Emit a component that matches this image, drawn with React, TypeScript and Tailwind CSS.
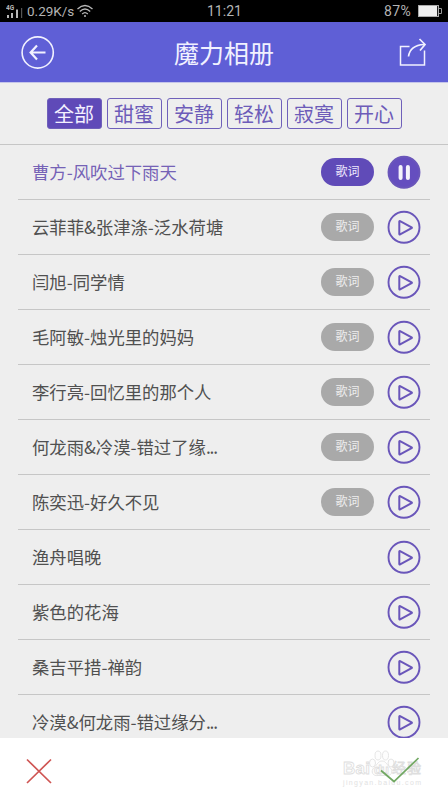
const tags = ['全部', '甜蜜', '安静', '轻松', '寂寞', '开心'];

const songs = [
  { title: '曹方-风吹过下雨天', lyrics: true, playing: true },
  { title: '云菲菲&张津涤-泛水荷塘', lyrics: true },
  { title: '闫旭-同学情', lyrics: true },
  { title: '毛阿敏-烛光里的妈妈', lyrics: true },
  { title: '李行亮-回忆里的那个人', lyrics: true },
  { title: '何龙雨&冷漠-错过了缘', clipped: true, lyrics: true },
  { title: '陈奕迅-好久不见', lyrics: true },
  { title: '渔舟唱晚', lyrics: false },
  { title: '紫色的花海', lyrics: false },
  { title: '桑吉平措-禅韵', lyrics: false },
  { title: '冷漠&何龙雨-错过缘分', clipped: true, lyrics: false },
];

function StatusBar() {
  return (
    <div className="relative flex h-[22px] shrink-0 items-center justify-between bg-black pl-[6px] pr-[5px] font-['Roboto','Noto_Sans',sans-serif] text-[13px] leading-[22px] text-[#b4b4b4]">
      <div className="flex items-center">
        <svg width="18" height="16" viewBox="0 0 18 16" fill="#b8b8b8">
          <text x="0" y="7" fontSize="6.500" fontWeight="700">4G</text>
          <path d="M1 12h2v3H1zM5 10h2v5H5zM10 6.500h2V15h-2z" />
          <path d="M15 5h1.200v10H15z" fill="#555" />
        </svg>
        <span className="ml-[3px] w-[47px] whitespace-nowrap text-[13.500px]">0.29K/s</span>
        <svg className="ml-[2px]" width="18" height="14" viewBox="0 0 18 14" fill="none" stroke="#b8b8b8" strokeWidth="1.300">
          <path d="M1.500 5Q9-2 16.500 5M3.800 7.500Q9 2.600 14.200 7.500M6.200 10Q9 7.300 11.800 10" />
          <circle cx="9" cy="12" r="1" fill="#b8b8b8" stroke="none" />
        </svg>
      </div>
      <span className="absolute left-[207px] text-[14px]">11:21</span>
      <div className="flex items-center gap-[7px]">
        <span className="text-[14px] tracking-[0.3px]">87%</span>
        <svg width="25" height="12" viewBox="0 0 25 12">
          <rect x=".5" y=".5" width="20" height="11" fill="#eee" stroke="#aaa" />
          <path d="M19 1h1v10h-1z" fill="#222" />
          <path d="M21 3.500h2.500v5H21" fill="none" stroke="#999" />
        </svg>
      </div>
    </div>
  );
}

function Header() {
  return (
    <header className="flex h-[61px] shrink-0 items-center justify-between border-b border-[#c5c5ea] bg-[#5f5fd6] pl-[21px] pr-[21px] text-[#f1f1ff]">
      <svg width="34" height="34" viewBox="0 0 34 34" fill="none" stroke="currentColor" strokeWidth="1.600">
        <circle cx="16.700" cy="17.500" r="15.600" />
        <path d="M24.500 17.500H10M16 10.500 9.600 17.500 16 24.500" strokeWidth="2.200" />
      </svg>
      <h1 className="text-[25px] leading-[36px]">魔力相册</h1>
      <svg width="34" height="34" viewBox="0 0 34 34" fill="none" stroke="currentColor" strokeWidth="1.500">
        <path d="M16.500 11.500H7.500V30h24V15.500" />
        <path d="M15.500 21.500C16.500 14.500 21 10 31 9.500" strokeWidth="1.700" />
        <path d="M26.500 4 32 9.500 27 15.500" strokeWidth="1.700" />
      </svg>
    </header>
  );
}

function Tags() {
  return (
    <nav className="flex h-[62px] shrink-0 justify-center gap-[5px] border-b border-[#c6c6c6] pt-[15px]">
      {tags.map((tag, i) => (
        <button
          key={tag}
          className={
            'flex h-[31px] w-[55px] items-center justify-center rounded-[3px] border border-[#6f60ba] text-[20px] leading-none ' +
            (i === 0 ? 'bg-[#5f4ab8] text-[#f3f0ff]' : 'text-[#6d5cb9]')
          }
        >
          {tag}
        </button>
      ))}
    </nav>
  );
}

function PlayButton({ playing }: { playing?: boolean }) {
  return (
    <svg className="shrink-0" width="34" height="34" viewBox="0 0 34 34" fill="none" stroke="#6a56ba">
      <circle cx="17" cy="17.300" r="15.500" strokeWidth="1.900" fill={playing ? '#654ebf' : 'none'} />
      {playing ? (
        <path d="M13.600 12v11M20.900 12v11" stroke="#f4f2fb" strokeWidth="4" strokeLinecap="round" />
      ) : (
        <path d="M12.300 11.600v12.400q0 .8.800.4L24.600 18.100q.7-.4 0-.8L13.100 11.200q-.8-.4-.8.400z" strokeWidth="2" strokeLinejoin="round" />
      )}
    </svg>
  );
}

function Footer() {
  return (
    <footer className="flex h-[49px] shrink-0 items-start justify-between bg-white pl-[26px] pr-[24px]">
      <svg className="mt-[20px]" width="26" height="26" viewBox="0 0 26 26" stroke="#cf5553" strokeWidth="1.700">
        <path d="M1 1.500 25 25M25 1.500 1 25" />
      </svg>
      <svg className="mt-[9px]" width="82" height="40" viewBox="0 0 82 40">
        <g fill="#fdfdfd" stroke="#dedede" strokeWidth=".8">
          <ellipse cx="30.500" cy="16" rx="3" ry="4" />
          <ellipse cx="36" cy="8.500" rx="3" ry="4.500" />
          <ellipse cx="43.500" cy="8.500" rx="3" ry="4.500" />
          <ellipse cx="49" cy="16" rx="3" ry="4" />
          <path d="M40 14c-4 0-5 4-8 6.500-4 4-1 9 4 8h8c5 1 8-4 4-8-3-2.500-4-6.500-8-6.500z" />
          <g fontFamily="Liberation Sans, Noto Sans CJK SC, sans-serif">
            <text x="1" y="27" fontSize="17" fontWeight="700" textLength="27">Bai</text>
            <text x="32" y="27" fontSize="13" fontWeight="700" textLength="15">du</text>
            <text x="50" y="26" fontSize="14" textLength="29">经验</text>
          </g>
        </g>
        <text x="1" y="38" fill="#e2e2e2" fontFamily="Liberation Sans, sans-serif" fontSize="7" textLength="78">jingyan.baidu.com</text>
        <path d="M39 23.500 52 34.500 76.500 11" fill="none" stroke="#71a862" strokeWidth="1.700" />
      </svg>
    </footer>
  );
}

export default function App() {
  return (
    <div className="flex h-[787px] w-[448px] flex-col overflow-hidden bg-[#eeeeee] font-['Noto_Sans_CJK_SC',sans-serif]">
      <StatusBar />
      <Header />
      <Tags />
      <ul className="min-h-0 flex-1 overflow-hidden px-[18px]">
        {songs.map((song) => (
          <li key={song.title} className="flex h-[55px] items-center border-b border-[#c6c6c6] pl-[14px] pr-[9px]">
            <span className={'flex-1 whitespace-nowrap text-[17.350px] leading-[26px] ' + (song.playing ? 'text-[#7562b6]' : 'text-[#505050]')}>
              {song.title}
              {song.clipped && <span className="tracking-[-1.200px]">...</span>}
            </span>
            {song.lyrics && (
              <span
                className={
                  'mr-[13px] flex h-[28px] w-[53px] items-center justify-center rounded-full pb-[2px] text-[12px] leading-none ' +
                  (song.playing ? 'bg-[#604bb8] text-[#eeeaff]' : 'bg-[#a9a9a9] text-[#eeeeee]')
                }
              >
                歌词
              </span>
            )}
            <PlayButton playing={song.playing} />
          </li>
        ))}
      </ul>
      <Footer />
    </div>
  );
}
